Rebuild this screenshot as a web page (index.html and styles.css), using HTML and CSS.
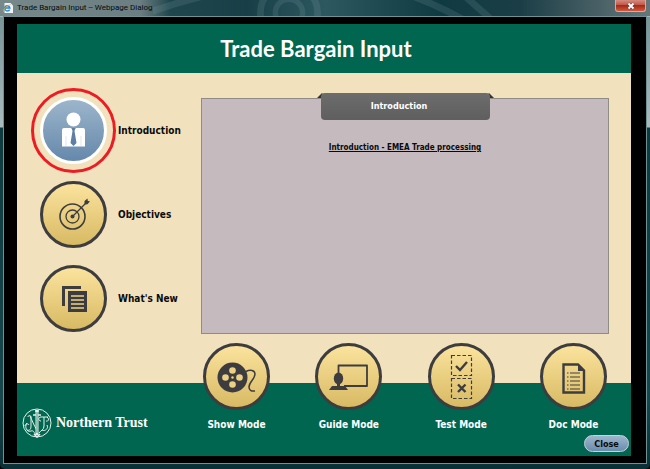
FILE: index.html
```html
<!DOCTYPE html>
<html lang="en">
<head>
<meta charset="utf-8">
<title>Trade Bargain Input -- Webpage Dialog</title>
<link rel="stylesheet" href="styles.css">
</head>
<body>
<div class="window">
  <div class="titlebar">
    <svg class="title-icon" viewBox="0 0 10 10" aria-hidden="true">
      <path d="M1.5 0h6L10 2.5V10H1.5z" fill="#eef3f5"/>
      <path d="M6.6 6.6A2.6 2.6 0 1 1 6.9 5H2" fill="none" stroke="#2a83cf" stroke-width="1.4"/>
      <path d="M.6 8.8C-.2 6.5 4 2 7.6 1.8" fill="none" stroke="#e8ae2c" stroke-width=".8"/>
    </svg>
    <span class="title-text">Trade Bargain Input -- Webpage Dialog</span>
    <svg class="title-art" viewBox="0 0 340 17" preserveAspectRatio="xMidYMid slice" aria-hidden="true">
      <g fill="none" stroke="#8fb0b4" stroke-opacity=".16">
        <circle cx="100" cy="12" r="10" stroke-width="4"/>
        <circle cx="100" cy="12" r="21" stroke-width="5"/>
        <path d="M-18 18Q14 4 54 -4M180 -4Q205 4 230 18M225 -4L250 18" stroke-width="5"/>
      </g>
    </svg>
    <button class="window-close" type="button" aria-label="Close window">
      <svg viewBox="0 0 8 8" aria-hidden="true"><path d="M1.5 1.5l5 5m0-5l-5 5" stroke="#5b4850" stroke-width="3"/><path d="M1.5 1.5l5 5m0-5l-5 5" stroke="#fff" stroke-width="1.8"/></svg>
    </button>
  </div>
  <div class="surround">
    <div class="app">
      <header class="app-header"><h1>Trade Bargain Input</h1></header>
      <main class="stage">
        <nav class="topics" aria-label="Topics">
          <button class="topic current" type="button">
            <span class="disc">
              <svg viewBox="0 0 67 67" aria-hidden="true">
                <circle cx="33.500" cy="22.500" r="7" fill="#fff"/>
                <path d="M24 31h7l2.500 2 2.500-2h7q2 0 2 2v16.500H22V33q0-2 2-2z" fill="#fff"/>
                <path d="M31.500 31h4l-1 3 2 12-3 3-3-3 2-12z" fill="#5c7fa3"/>
                <path d="M26 39v10M41 39v10" stroke="#c9d7e3" stroke-width=".6"/>
              </svg>
            </span>
            <span>Introduction</span>
          </button>
          <button class="topic" type="button">
            <span class="disc">
              <svg viewBox="0 0 67 67" aria-hidden="true">
                <g fill="none" stroke="#3d3d3f">
                  <circle cx="32.500" cy="35.500" r="12.500" stroke-width="1.600"/>
                  <circle cx="32.500" cy="35.500" r="6.500" stroke-width="1.300"/>
                  <path d="M32.500 35.500L47 21" stroke-width="1.300"/>
                </g>
                <circle cx="32.500" cy="35.500" r="2" fill="#3d3d3f"/>
                <path d="M44.500 23.500v-3.500l3-2.500.300 2.500 2.200.300-2.500 3z" fill="#3d3d3f"/>
              </svg>
            </span>
            <span>Objectives</span>
          </button>
          <button class="topic" type="button">
            <span class="disc">
              <svg viewBox="0 0 67 67" aria-hidden="true">
                <path d="M22 21h19v3H25v17h-3z" fill="#3d3d3f"/>
                <path d="M28 26h19v21H28z" fill="#3d3d3f"/>
                <path d="M31 31h13M31 35h13M31 39h13M31 43h13" stroke="#eed488" stroke-width="1.500"/>
              </svg>
            </span>
            <span>What's New</span>
          </button>
        </nav>
        <section class="panel">
          <h2 class="panel-tab">Introduction</h2>
          <a class="panel-link" href="#emea">Introduction - EMEA Trade processing</a>
        </section>
      </main>
      <footer class="app-footer">
        <div class="brand">
          <svg viewBox="0 0 30 30" aria-hidden="true">
            <g fill="none" stroke="#e6f0ec">
              <circle cx="15" cy="15" r="14" stroke-width="1"/>
              <path d="M15 2v25" stroke-width="3"/>
              <path d="M13 3h4M11 7h8M12 26l3 3 3-3" stroke-width="1.500"/>
              <path d="M5 22c3 1 4-1 4-4V9c0-2-3-2-3 0M8 8c2 4 4 10 7 14M19 9h7M22 9v9c0 4-3 4-5 7M19 9c-3 0-3 4 0 4M25 9c3 2 1 5-1 4M5 15c-3 4 0 10 4 8 3-1 3 2 5 4M25 17c2 3-2 7-5 5M3 18c0-2 3-3 4-1" stroke-width="1"/>
            </g>
            <path d="M15 4v21" stroke="#00664f" stroke-width=".7"/>
          </svg>
          <span>Northern Trust</span>
        </div>
        <nav class="modes" aria-label="Modes">
          <button class="mode" type="button">
            <span class="disc">
              <svg viewBox="0 0 67 67" aria-hidden="true">
                <circle cx="29.500" cy="34.500" r="15" fill="#3d3d3f"/>
                <g fill="#ecd083"><circle cx="29.500" cy="27.500" r="3.300"/><circle cx="29.500" cy="41.500" r="3.300"/><circle cx="22.500" cy="34.500" r="3.300"/><circle cx="36.500" cy="34.500" r="3.300"/><circle cx="29.500" cy="34.500" r="1.200"/></g>
                <path d="M43 28.500c4-2 9-1.500 9 2.500 0 5-6 8-6 13 0 3 2 4.500 6 4" fill="none" stroke="#3d3d3f" stroke-width="1.500"/>
              </svg>
            </span>
            <span>Show Mode</span>
          </button>
          <button class="mode" type="button">
            <span class="disc">
              <svg viewBox="0 0 67 67" aria-hidden="true">
                <path d="M23.500 31v-8.500h28.500v20.500H29" fill="none" stroke="#3d3d3f" stroke-width="1.800" stroke-linejoin="round"/>
                <ellipse cx="23.500" cy="35.500" rx="4.700" ry="6" fill="#3d3d3f"/>
                <path d="M22 40h3v3h5l3 4H14l3-4h5z" fill="#3d3d3f"/>
              </svg>
            </span>
            <span>Guide Mode</span>
          </button>
          <button class="mode" type="button">
            <span class="disc">
              <svg viewBox="0 0 67 67" aria-hidden="true">
                <g fill="none" stroke="#3d3d3f">
                  <path d="M23.500 12.500h20v20h-20zM23.500 35.500h20v20h-20z" stroke-width="1.200" stroke-dasharray="3.500 2"/>
                  <path d="M28 23l4 4 7-8" stroke-width="2.400"/>
                  <path d="M30 41.500l7.500 7.500m0-7.500L30 49" stroke-width="2.400"/>
                </g>
              </svg>
            </span>
            <span>Test Mode</span>
          </button>
          <button class="mode" type="button">
            <span class="disc">
              <svg viewBox="0 0 67 67" aria-hidden="true">
                <path d="M23.500 21.500H38l6 6V49.500H23.500z" fill="none" stroke="#3d3d3f" stroke-width="2.400"/>
                <path d="M38 21l7 7h-7z" fill="#3d3d3f"/>
                <path d="M27 30h1.500M30 30h10M27 34h1.500M30 34h10M27 38h1.500M30 38h10M27 42h1.500M30 42h10M27 46h1.500M30 46h10" stroke="#3d3d3f" stroke-width="1.200"/>
              </svg>
            </span>
            <span>Doc Mode</span>
          </button>
        </nav>
        <button class="close" type="button">Close</button>
      </footer>
    </div>
  </div>
</div>
</body>
</html>
```
FILE: styles.css
```css
* { box-sizing: border-box; }
body {
  margin: 0;
  background: #000;
  font: bold 10px/16px "DejaVu Sans Condensed", "Noto Sans", sans-serif;
  color: #0a0a0a;
}
button {
  margin: 0;
  padding: 0;
  border: 0;
  background: none;
  font: inherit;
  color: inherit;
  cursor: pointer;
}
.window {
  display: flex;
  flex-direction: column;
  min-height: 100vh;
  padding: 0 4px 6px;
  border-radius: 5px;
  background: linear-gradient(#6f8e92, #a9bcbd 127px, #0d3b40 128px, #16484d 400px, #0a3036);
}
.titlebar {
  display: flex;
  align-items: center;
  height: 17px;
  margin: 0 -4px;
  padding-left: 3px;
  border-bottom: 1px solid #a5b5b7;
  background: linear-gradient(90deg, #77888a, #6b7e81 140px, #20464d 170px, #183f47 38%, #2d5860 50%, #103a42 68%, #1b3e46 80%, #66777a);
}
.title-icon { width: 10px; height: 10px; }
.title-text {
  margin-left: 4px;
  font: 8px/12px Roboto, sans-serif;
  color: #050b0c;
}
.title-art { flex: 1; min-width: 0; height: 16px; }
.window-close {
  display: flex;
  align-items: center;
  justify-content: center;
  align-self: flex-start;
  width: 31px;
  height: 12px;
  margin-right: 4px;
  border: 1px solid #d3aaa5;
  border-top: 0;
  border-radius: 0 0 3px 3px;
  background: linear-gradient(#d48c80, #c25646 45%, #a62a17 50%, #d0593c);
}
.window-close svg { width: 8px; height: 8px; }
.surround {
  display: flex;
  flex: 1;
  padding: 7px 15px 7px 13px;
  background: #000;
  box-shadow: 0 0 0 1px #6f9094;
}
.app {
  display: flex;
  flex: 1;
  flex-direction: column;
  background: #f2e1bd;
}
.app-header {
  padding: 11px 16px 10px 0;
  background: #00664f;
  text-align: center;
  color: #fff;
}
.app-header h1 {
  margin: 0;
  font: bold 22px/28px Lato, sans-serif;
}
.stage {
  display: flex;
  flex: 1;
  padding: 24px 22px 49px 23px;
}
.topics {
  display: flex;
  flex-direction: column;
  gap: 17px;
  width: 161px;
}
.topic {
  display: flex;
  align-items: center;
  gap: 11px;
  text-align: left;
}
.disc {
  position: relative;
  display: block;
  width: 67px;
  height: 67px;
  border: 3px solid #3d3d3f;
  border-radius: 50%;
  background: linear-gradient(#fbe39e, #d8ba63);
}
.disc svg {
  display: block;
  width: 67px;
  height: 67px;
  margin: -3px;
}
.current .disc {
  border-color: #fff;
  background: linear-gradient(#9cb5cb, #6588ab);
}
.current .disc::after {
  position: absolute;
  inset: -12px;
  border: 3px solid #ed1c24;
  border-radius: 50%;
  content: "";
}
.panel {
  display: flex;
  flex: 1;
  flex-direction: column;
  align-items: center;
  gap: 20px;
  margin-top: 1px;
  border: 1px solid #8f8c85;
  background: #c5babd;
  isolation: isolate;
}
.panel-tab {
  position: relative;
  width: 169px;
  margin: -6px 0 0;
  padding: 5px 12px 6px 0;
  border-radius: 4px;
  background: linear-gradient(#6c6c6c, #5f5f5f);
  font-size: 9px;
  text-align: center;
  color: #fff;
}
.panel-tab::before,
.panel-tab::after {
  position: absolute;
  top: 0;
  z-index: -1;
  border: 0 solid transparent;
  border-bottom: 5px solid #333;
  content: "";
}
.panel-tab::before { left: -4px; border-left-width: 5px; border-right-width: 4px; }
.panel-tab::after { right: -4px; border-right-width: 5px; border-left-width: 4px; }
.panel-link { font-size: 8px; color: #0a0a0a; }
.app-footer {
  position: relative;
  display: flex;
  height: 73px;
  background: #00664f;
  color: #fff;
}
.brand {
  display: flex;
  align-items: center;
  gap: 4px;
  width: 164px;
  height: 30px;
  margin: 25px 0 0 5px;
  font: bold 14px/20px "Liberation Serif", serif;
  white-space: nowrap;
}
.brand svg { width: 30px; height: 30px; }
.modes {
  display: flex;
  flex: 1;
  justify-content: space-between;
  margin: -40px 7px 0 0;
}
.mode {
  display: flex;
  flex-direction: column;
  align-items: center;
  gap: 7px;
  width: 101px;
  height: 90px;
}
.close {
  position: absolute;
  right: 2px;
  bottom: 4px;
  width: 45px;
  height: 17px;
  border: 1px solid #c4d4df;
  border-radius: 9px;
  background: linear-gradient(#9eb6cc, #6b8cae);
  font: bold 9px/14px "DejaVu Sans Condensed", sans-serif;
  color: #0a0a0a;
}
```
